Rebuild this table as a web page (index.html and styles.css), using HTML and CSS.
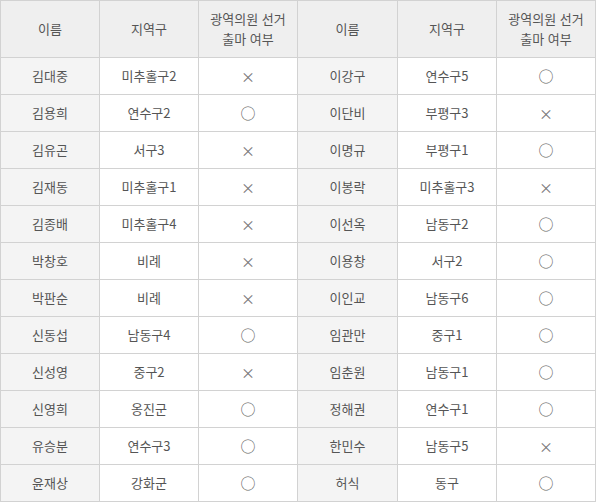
FILE: index.html
```html
<!DOCTYPE html>
<html lang="ko">
<head>
<meta charset="utf-8">
<link rel="stylesheet" href="styles.css">
</head>
<body>
<table class="tbl">
  <colgroup>
    <col class="c1"><col class="c2"><col class="c3"><col class="c4"><col class="c5"><col class="c6">
  </colgroup>
  <thead>
    <tr>
      <th>이름</th><th>지역구</th><th>광역의원 선거<br>출마 여부</th>
      <th>이름</th><th>지역구</th><th>광역의원 선거<br>출마 여부</th>
    </tr>
  </thead>
  <tbody>
    <tr><td class="nm">김대중</td><td>미추홀구2</td><td><span class="x">×</span></td><td class="nm">이강구</td><td>연수구5</td><td><span class="o">○</span></td></tr>
    <tr><td class="nm">김용희</td><td>연수구2</td><td><span class="o">○</span></td><td class="nm">이단비</td><td>부평구3</td><td><span class="x">×</span></td></tr>
    <tr><td class="nm">김유곤</td><td>서구3</td><td><span class="x">×</span></td><td class="nm">이명규</td><td>부평구1</td><td><span class="o">○</span></td></tr>
    <tr><td class="nm">김재동</td><td>미추홀구1</td><td><span class="x">×</span></td><td class="nm">이봉락</td><td>미추홀구3</td><td><span class="x">×</span></td></tr>
    <tr><td class="nm">김종배</td><td>미추홀구4</td><td><span class="x">×</span></td><td class="nm">이선옥</td><td>남동구2</td><td><span class="o">○</span></td></tr>
    <tr><td class="nm">박창호</td><td>비례</td><td><span class="x">×</span></td><td class="nm">이용창</td><td>서구2</td><td><span class="o">○</span></td></tr>
    <tr><td class="nm">박판순</td><td>비례</td><td><span class="x">×</span></td><td class="nm">이인교</td><td>남동구6</td><td><span class="o">○</span></td></tr>
    <tr><td class="nm">신동섭</td><td>남동구4</td><td><span class="o">○</span></td><td class="nm">임관만</td><td>중구1</td><td><span class="o">○</span></td></tr>
    <tr><td class="nm">신성영</td><td>중구2</td><td><span class="x">×</span></td><td class="nm">임춘원</td><td>남동구1</td><td><span class="o">○</span></td></tr>
    <tr><td class="nm">신영희</td><td>옹진군</td><td><span class="o">○</span></td><td class="nm">정해권</td><td>연수구1</td><td><span class="o">○</span></td></tr>
    <tr><td class="nm">유승분</td><td>연수구3</td><td><span class="o">○</span></td><td class="nm">한민수</td><td>남동구5</td><td><span class="x">×</span></td></tr>
    <tr><td class="nm">윤재상</td><td>강화군</td><td><span class="o">○</span></td><td class="nm">허식</td><td>동구</td><td><span class="o">○</span></td></tr>
  </tbody>
</table>
</body>
</html>
```
FILE: styles.css
```css
html, body {
  margin: 0;
  padding: 0;
  background: #fff;
}
.tbl {
  width: 596px;
  border-collapse: collapse;
  table-layout: fixed;
  font-family: "Noto Sans CJK KR", "Noto Sans", sans-serif;
  font-size: 13px;
  color: #555;
}
.c1, .c2, .c3, .c5, .c6 { width: 99px; }
.c4 { width: 100px; }
.tbl th, .tbl td {
  border: 1px solid #d2d2d2;
  text-align: center;
  vertical-align: middle;
  padding: 0;
  line-height: 20px;
}
.tbl th {
  background: #efefef;
  font-weight: normal;
  height: 56px;
}
.tbl td {
  height: 36px;
}
.tbl td.nm {
  background: #f4f4f4;
}
.o {
  font-size: 15px;
  color: #666;
}
.x {
  font-size: 14px;
  color: #777;
}
```
